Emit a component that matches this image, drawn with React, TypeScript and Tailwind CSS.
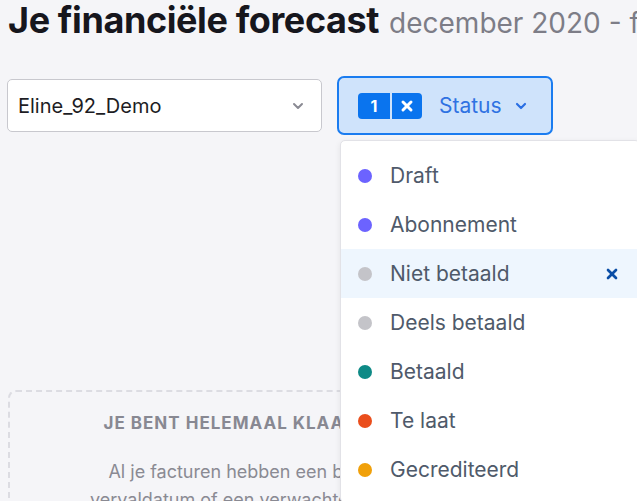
import { ChevronDown, X } from "lucide-react";

const statuses = [
  { label: "Draft", dot: "bg-[#6c63ff]" },
  { label: "Abonnement", dot: "bg-[#6c63ff]" },
  { label: "Niet betaald", dot: "bg-[#c4c4c9]", active: true },
  { label: "Deels betaald", dot: "bg-[#c4c4c9]" },
  { label: "Betaald", dot: "bg-[#0e8a86]" },
  { label: "Te laat", dot: "bg-[#ea4e1c]" },
  { label: "Gecrediteerd", dot: "bg-[#f0a00a]" },
];

export default function App() {
  return (
    <div
      className="relative h-[501px] w-[637px] overflow-hidden bg-[#f5f5f8]"
      style={{ fontFamily: "Inter, 'Noto Sans', sans-serif" }}
    >
      <div className="px-2">
        <h1 className="flex h-[40px] items-baseline gap-[10px] whitespace-nowrap">
          <span className="text-[36px] font-bold leading-[40px] tracking-[-0.4px] text-[#16161d]">
            Je financiële forecast
          </span>
          <span className="text-[28px] leading-[40px] text-[#7d7d87]">december 2020 - februari 2021</span>
        </h1>

        <div className="mt-[36px] flex items-start gap-4">
          <button className="ml-[-1px] mt-[3px] flex h-[53px] w-[315px] items-center justify-between rounded-[5px] border border-[#c8c8ce] bg-white pl-[10px] pr-[15px] text-[20px] text-[#1d1d24]">
            Eline_92_Demo
            <ChevronDown size={16} strokeWidth={3} className="text-[#8a8a93]" />
          </button>

          <div className="relative">
            <button className="ml-[-1px] flex h-[59px] w-[216px] items-center rounded-[7px] border-[2.5px] border-[#1a7cf0] bg-[#cfe3fb] pl-[19px]">
              <span className="flex h-[26px] overflow-hidden rounded-[4px] bg-[#0a74ee] text-white">
                <span className="flex w-[32px] items-center justify-center text-[16px] font-bold">1</span>
                <span className="w-[2px] bg-[#cfe3fb]" />
                <span className="flex w-[30px] items-center justify-center">
                  <X size={16} strokeWidth={4.5} />
                </span>
              </span>
              <span className="ml-[17px] text-[21px] text-[#2f72e2]">Status</span>
              <ChevronDown size={16} strokeWidth={3.2} className="ml-[11px] text-[#2a6fe3]" />
            </button>

            <div className="absolute left-[2px] top-[64px] z-10 w-[300px] rounded-[5px] border border-[#e2e2e7] bg-white pt-[10px] pb-2 shadow-[0_2px_6px_rgba(0,0,0,0.08)]">
              {statuses.map((s) => (
                <div
                  key={s.label}
                  className={`flex h-[49px] items-center pl-[17px] pr-[19px] ${s.active ? "bg-[#eef6fe]" : ""}`}
                >
                  <span className={`h-[14px] w-[14px] rounded-full ${s.dot}`} />
                  <span className="ml-[18px] flex-1 text-[21px] text-[#4f5a6a]">{s.label}</span>
                  {s.active && (
                    <span className="text-[#0b4ea6]">
                      <X size={16} strokeWidth={4} />
                    </span>
                  )}
                </div>
              ))}
            </div>
          </div>
        </div>

        <div className="mt-[255px] rounded-[8px] border-2 border-dashed border-[#dcdce2] pt-[19px] text-center">
          <p className="text-[17px] font-bold tracking-[1px] text-[#888892]">
            JE BENT HELEMAAL KLAAR MET JE FACTUREN
          </p>
          <p className="mt-[21px] whitespace-nowrap text-[18px] leading-[28px] text-[#8a8a93]">
            Al je facturen hebben een betaaldatum gekregen,
            <br />
            vervaldatum of een verwachte betaaldatum ingesteld.
          </p>
        </div>
      </div>
    </div>
  );
}
